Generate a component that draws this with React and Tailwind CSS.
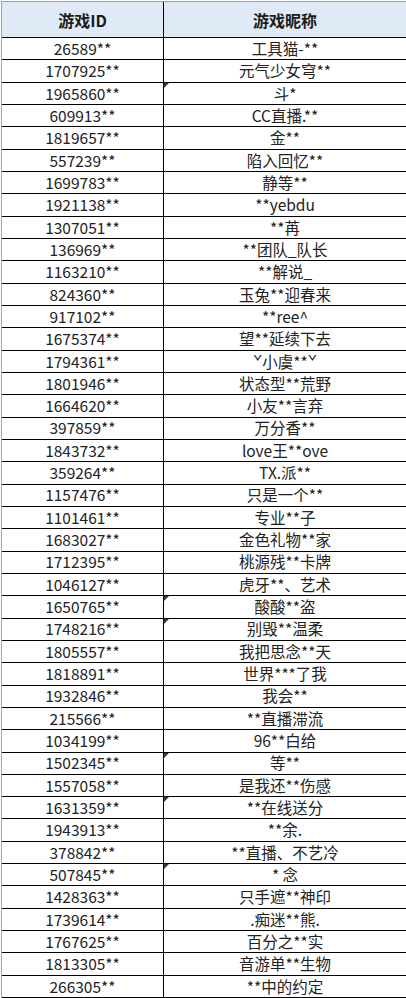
import React from "react";

const rows = [
  ["26589**", "工具猫-**"],
  ["1707925**", "元气少女穹**"],
  ["1965860**", "斗*", true],
  ["609913**", "CC直播.**"],
  ["1819657**", "金**"],
  ["557239**", "陷入回忆**"],
  ["1699783**", "静等**"],
  ["1921138**", "**yebdu"],
  ["1307051**", "**苒"],
  ["136969**", "**团队_队长"],
  ["1163210**", "**解说_"],
  ["824360**", "玉兔**迎春来"],
  ["917102**", "**ree^"],
  ["1675374**", "望**延续下去"],
  ["1794361**", "ˇ小虞**ˇ"],
  ["1801946**", "状态型**荒野"],
  ["1664620**", "小友**言弃"],
  ["397859**", "万分香**"],
  ["1843732**", "love王**ove"],
  ["359264**", "TX.派**"],
  ["1157476**", "只是一个**"],
  ["1101461**", "专业**子"],
  ["1683027**", "金色礼物**家"],
  ["1712395**", "桃源残**卡牌"],
  ["1046127**", "虎牙**、艺术"],
  ["1650765**", "酸酸**盗", true],
  ["1748216**", "别毁**温柔", true],
  ["1805557**", "我把思念**天"],
  ["1818891**", "世界***了我"],
  ["1932846**", "我会**"],
  ["215566**", "**直播滞流"],
  ["1034199**", "96**白给"],
  ["1502345**", "等**", true],
  ["1557058**", "是我还**伤感"],
  ["1631359**", "**在线送分", true],
  ["1943913**", "**余."],
  ["378842**", "**直播、不艺冷"],
  ["507845**", "* 念", true],
  ["1428363**", "只手遮**神印"],
  ["1739614**", ".痴迷**熊."],
  ["1767625**", "百分之**实"],
  ["1813305**", "音游单**生物"],
  ["266305**", "**中的约定"],
];

const font = { fontFamily: '"Noto Sans CJK SC", "Noto Sans", sans-serif' };

const Mark = () => (
  <svg className="absolute top-0 left-0" width="5" height="5" viewBox="0 0 5 5">
    <polygon points="0,0 5,0 0,5" fill="#3a3a3a" />
  </svg>
);

const App = () => {
  return (
    <div className="w-[406px] h-[998px] bg-white pt-px pl-px overflow-hidden" style={font}>
      <div className="border-t border-l border-[#a3a3a3]">
        <div className="flex h-[36px] bg-[#dfeaf6] border-b border-black text-[16px] font-bold text-[#1b1b1b]">
          <div className="w-[162px] border-r border-black flex items-center justify-center">游戏ID</div>
          <div className="flex-1 flex items-center justify-center">游戏昵称</div>
        </div>
        {rows.map(([id, name, mark], i) => (
          <div key={i} className="flex h-[22.33px] border-b border-black text-[15.5px] text-[#222] leading-none">
            <div className="w-[162px] border-r border-black flex items-center justify-center">{id}</div>
            <div className="relative flex-1 flex items-center justify-center">
              {mark && <Mark />}
              {name}
            </div>
          </div>
        ))}
      </div>
    </div>
  );
};

export default App;
